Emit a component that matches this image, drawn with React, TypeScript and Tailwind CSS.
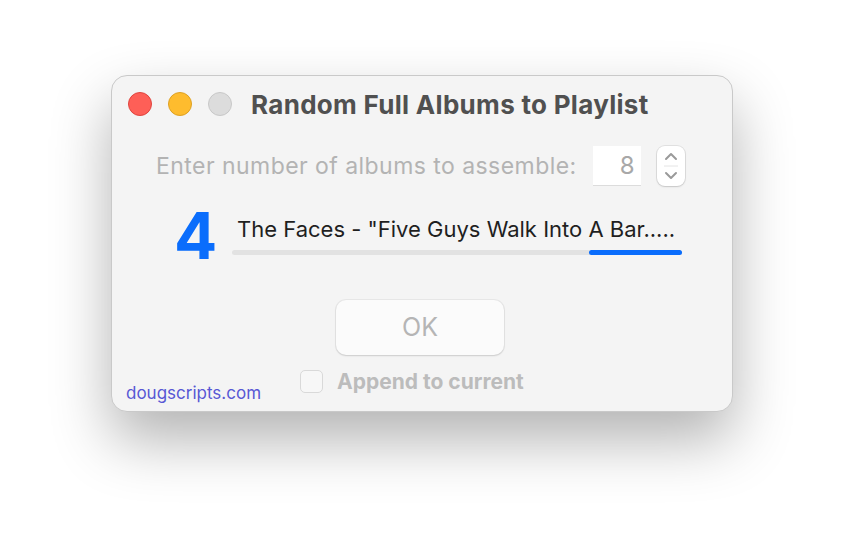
import React from 'react';

const font = { fontFamily: 'Inter, "Liberation Sans", Arial, sans-serif' };

function Light({ color, border }: { color: string; border: string }) {
    return <span className={`block w-6 h-6 rounded-full border ${color} ${border}`} />;
}

export default function App() {
    return (
        <div className="w-[844px] h-[560px] bg-white pt-[75px] pl-[111px]" style={font}>
            <div className="w-[622px] h-[337px] rounded-[16px] bg-[#f4f4f4] border border-[#c9c9c9] shadow-[0_28px_60px_rgba(0,0,0,0.3)] flex flex-col relative">
                {/* Title bar */}
                <div className="flex items-center h-[56px] pl-[16px]">
                    <div className="flex gap-[16px]">
                        <Light color="bg-[#fe5f57]" border="border-[#e0443e]" />
                        <Light color="bg-[#febc2e]" border="border-[#dea123]" />
                        <Light color="bg-[#dcdcdc]" border="border-[#c8c8c8]" />
                    </div>
                    <h1 className="ml-[19px] text-[26px] font-bold text-[#505050] tracking-[0.3px]">Random Full Albums to Playlist</h1>
                </div>

                {/* Count row */}
                <div className="flex items-center mt-[14px] pl-[44px]">
                    <span className="text-[23px] text-[#b3b3b3] tracking-[0.45px]">Enter number of albums to assemble:</span>
                    <div className="ml-[16px] w-[48px] h-[40px] bg-white border-b border-[#dcdcdc] flex items-center justify-end pr-[6px] text-[24px] text-[#a8a8a8]">8</div>
                    <div className="ml-[16px] w-[28px] h-[40px] rounded-[8px] bg-white shadow-[0_0_0_1px_rgba(0,0,0,0.08),0_1px_2px_rgba(0,0,0,0.12)] flex flex-col items-center justify-center">
                        <svg width="14" height="36" viewBox="0 0 14 36" fill="none" stroke="#9a9a9a" strokeWidth="2" strokeLinecap="round" strokeLinejoin="round">
                            <path d="M2 11 L7 6 L12 11" />
                            <line x1="-4" y1="18" x2="18" y2="18" stroke="#e4e4e4" strokeWidth="1" />
                            <path d="M2 25 L7 30 L12 25" />
                        </svg>
                    </div>
                </div>

                {/* Progress row */}
                <div className="flex items-start mt-[18px] pl-[62px]">
                    <span className="text-[64px] leading-[64px] font-bold text-[#0a6dfc] w-[58px]">4</span>
                    <div className="flex flex-col w-[450px] pt-[12px]">
                        <span className="pl-[5px] text-[22px] text-[#1f1f1f] leading-[26px] whitespace-nowrap">The Faces - "Five Guys Walk Into A Bar.....</span>
                        <div className="mt-[8px] h-[5px] rounded-full bg-[#e2e2e2] flex justify-end">
                            <div className="w-[93px] h-full rounded-full bg-[#0a6dfc]" />
                        </div>
                    </div>
                </div>

                {/* OK button */}
                <div className="flex justify-center mt-[32px] pr-[4px]">
                    <button className="w-[168px] h-[55px] rounded-[10px] bg-[#fbfbfb] shadow-[0_0_0_1px_rgba(0,0,0,0.05),0_1px_2px_rgba(0,0,0,0.12)] text-[25px] text-[#b5b5b5]">OK</button>
                </div>

                {/* Bottom */}
                <div className="flex items-center mt-[11px] pl-[188px]">
                    <span className="w-[23px] h-[23px] rounded-[5px] bg-[#f7f7f7] border border-[#d9d9d9]" />
                    <span className="ml-[14px] text-[21px] font-bold text-[#bcbcbc]">Append to current</span>
                </div>
                <span className="absolute left-[14px] bottom-[5px] text-[17px] text-[#5858d4]">dougscripts.com</span>
            </div>
        </div>
    );
}
